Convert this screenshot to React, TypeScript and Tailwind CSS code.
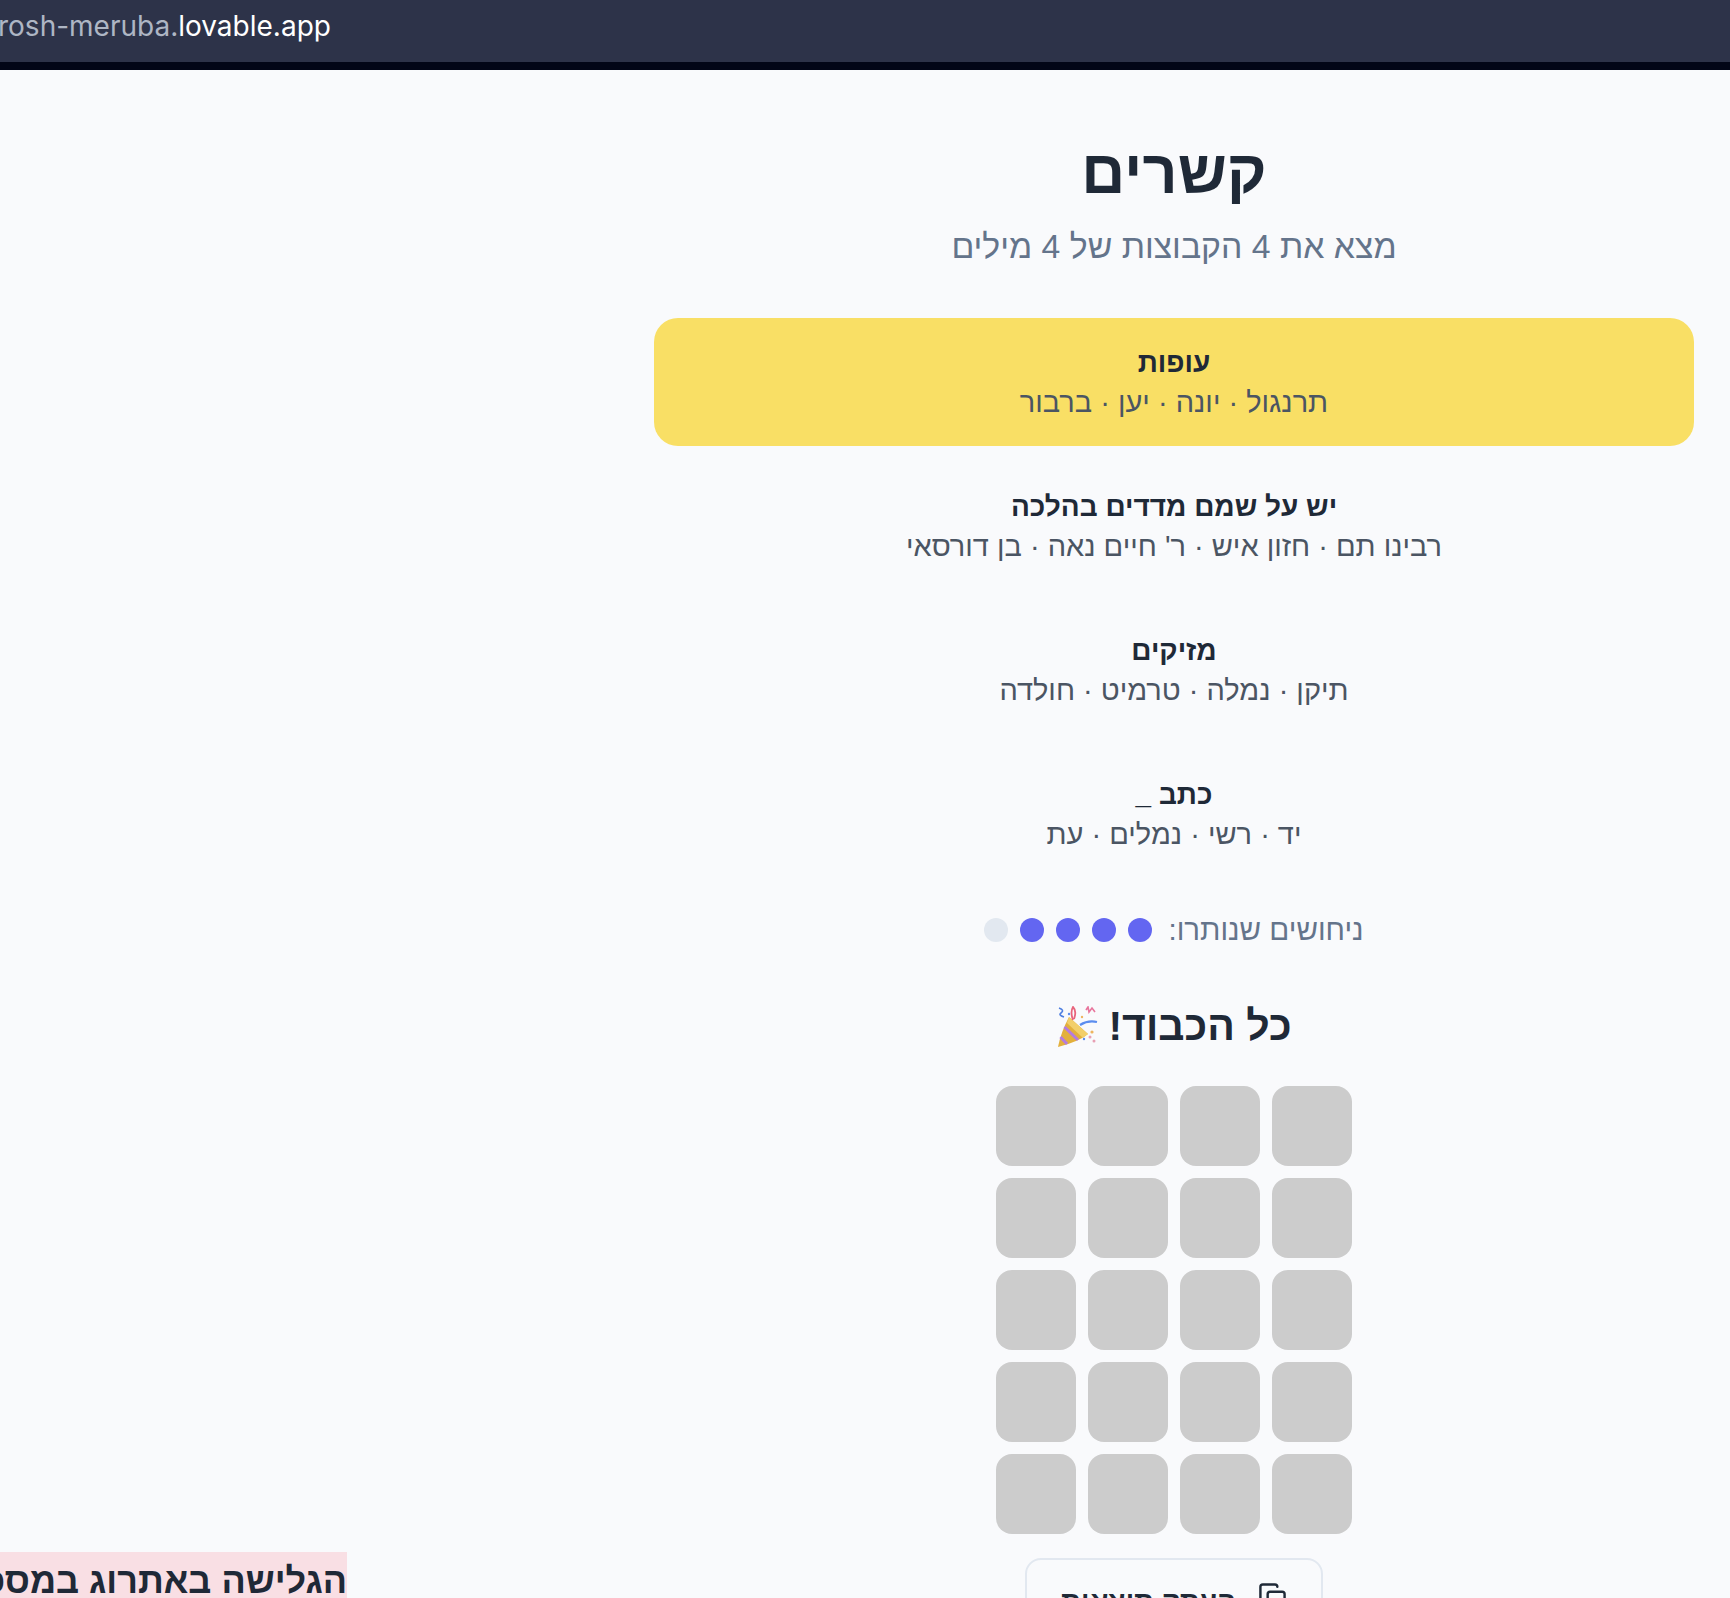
import { Copy } from 'lucide-react';

const groups = [
  { title: 'עופות', words: 'תרנגול · יונה · יען · ברבור', solved: true },
  { title: 'יש על שמם מדדים בהלכה', words: "רבינו תם · חזון איש · ר' חיים נאה · בן דורסאי", solved: false },
  { title: 'מזיקים', words: 'תיקן · נמלה · טרמיט · חולדה', solved: false },
  { title: 'כתב _', words: 'יד · רשי · נמלים · עת', solved: false },
];

const guesses = [true, true, true, true, false];
const tiles = Array.from({ length: 20 }, (_, i) => i);

function PartyPopper() {
  return (
    <svg width="42" height="42" viewBox="0 0 42 42" fill="none" aria-hidden="true">
      <path d="M13 11 L32 28 Q22 36 2 41 Q5 26 13 11 Z" fill="#e3b03c" />
      <path d="M13 11 L32 28 L27 32 L11 17 Z" fill="#f2cf6a" />
      <path d="M8.5 21 L22 34" stroke="#b57be0" strokeWidth="3" />
      <path d="M4.5 31 L11 38" stroke="#b57be0" strokeWidth="3" />
      <path d="M24 19 Q32 14 41 16" stroke="#5b8def" strokeWidth="2.2" />
      <path d="M17 14 Q14 6 17 1 Q21 5 18 13" stroke="#e8647c" strokeWidth="1.8" />
      <path d="M3 2 Q9 4 5 7 Q2 9 8 11" stroke="#4f7fe0" strokeWidth="1.6" />
      <path d="M30 4 L32 1 L33 6 L36 2 L39 6" stroke="#e8749c" strokeWidth="1.6" />
      <circle cx="36" cy="26" r="1.6" fill="#eeb55e" />
      <circle cx="34" cy="31" r="1.5" fill="#e8a0b4" />
      <circle cx="38" cy="35" r="1.5" fill="#e8a0b4" />
      <circle cx="28" cy="33" r="1.2" fill="#5b8def" />
      <circle cx="13" cy="8" r="1.2" fill="#5b8def" />
      <circle cx="26" cy="11" r="1.2" fill="#eeb55e" />
    </svg>
  );
}

export default function App() {
  return (
    <div className="h-[1598px] overflow-hidden bg-[#f9fafc] [font-family:'Liberation_Sans',Arial,sans-serif] text-[#1f2937]">
      <div className="flex h-[70px] items-start border-b-8 border-[#020617] bg-[#2d3349]">
        <div className="mt-[6px] -ml-[2px] [font-family:Inter,sans-serif] text-[28px] leading-[40px] text-white">
          <span className="text-[#aeb6c4]">rosh-meruba.</span>lovable.app
        </div>
      </div>

      <div className="flex">
        <div className="flex-1 pt-[1482px]">
          <div dir="rtl" className="h-[80px] w-[347px] overflow-hidden whitespace-nowrap bg-[#f9dfe4] pt-[2px] text-[36px] font-bold leading-[54px] text-[#1f2937]">
            הגלישה באתרוג במסכת סוכה
          </div>
        </div>

        <main dir="rtl" className="mr-[36px] w-[1040px]">
          <div className="pt-[66px] text-center">
            <h1 className="text-[61px] font-bold leading-[72px]">קשרים</h1>
            <p className="mt-[20px] text-[33.75px] leading-[36px] text-[#64748b]">מצא את 4 הקבוצות של 4 מילים</p>
          </div>

          <div className="mt-[54px] flex flex-col gap-4">
            {groups.map((g) => (
              <div key={g.title} className={`h-32 rounded-3xl px-6 pt-[25px] text-center ${g.solved ? 'bg-[#f9df65]' : ''}`}>
                <div className="h-[39px] text-[28px] font-bold leading-[40px]">{g.title}</div>
                <div className="text-[29px] leading-[40px] text-[#4b5563]">{g.words}</div>
              </div>
            ))}
          </div>

          <div className="mt-[40px] flex items-center justify-center gap-4">
            <span className="text-[29.5px] leading-[24px] text-[#64748b]">ניחושים שנותרו:</span>
            <div className="flex gap-3">
              {guesses.map((on, i) => (
                <div key={i} className={`h-6 w-6 rounded-full ${on ? 'bg-[#6366f1]' : 'bg-[#e2e8f0]'}`} />
              ))}
            </div>
          </div>

          <div className="mt-[55px] flex h-[60px] items-center justify-center gap-[10px] text-[41px] font-bold">
            <span>כל הכבוד!</span>
            <PartyPopper />
          </div>

          <div className="mt-[29px] flex justify-center">
            <div className="grid w-[356px] grid-cols-4 gap-3">
              {tiles.map((t) => (
                <div key={t} className="h-20 w-20 rounded-2xl bg-[#cccccc]" />
              ))}
            </div>
          </div>

          <div className="mt-[24px] flex justify-center">
            <button className="flex h-[77px] w-[298px] items-center justify-center gap-[22px] rounded-2xl border-2 border-[#e2e8f0] text-[28px] font-bold">
              <Copy size={29} />
              <span className="mt-[10px]">העתק תוצאות</span>
            </button>
          </div>
        </main>
      </div>
    </div>
  );
}
